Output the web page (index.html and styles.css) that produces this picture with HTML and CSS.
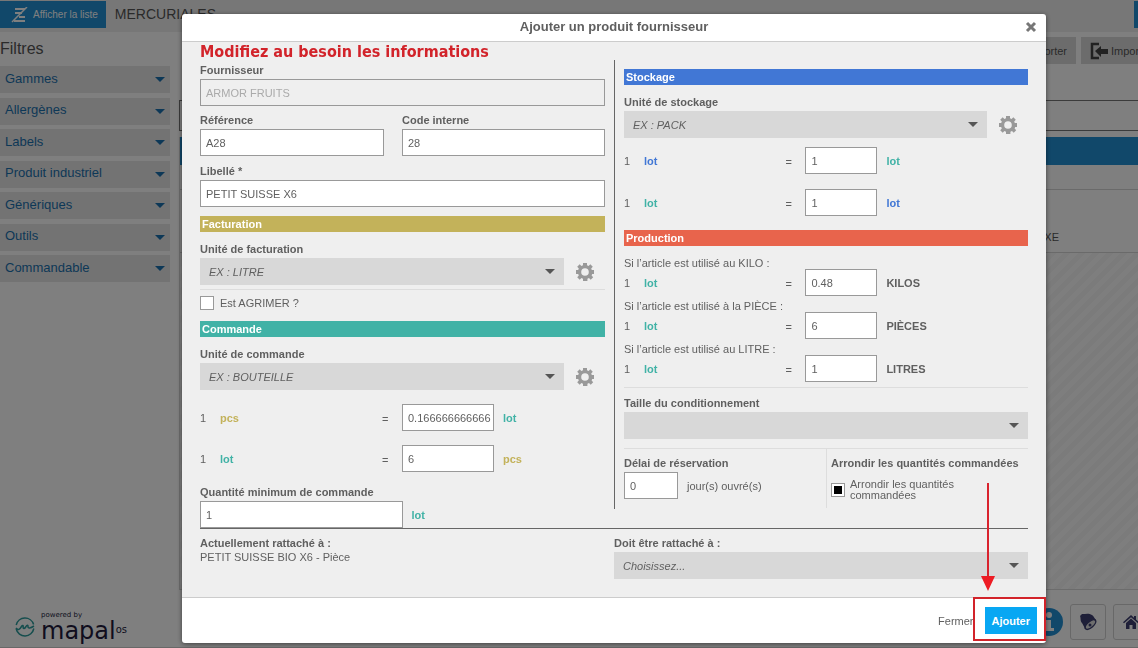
FILE: index.html
```html
<!DOCTYPE html>
<html lang="fr">
<head>
<meta charset="utf-8">
<title>Mercuriales</title>
<link rel="stylesheet" href="styles.css">
</head>
<body>
<svg class="defs" width="0" height="0" aria-hidden="true">
  <symbol id="gear" viewBox="0 0 20 20">
    <path fill-rule="evenodd" d="M8 1h4v2.200l1.600.7 1.700-1.600 2.500 2.500-1.600 1.700.6 1.500H19v4h-1.800l-.6 1.500 1.600 1.700-2.500 2.500-1.700-1.600-1.600.7V19H8v-2.200l-1.600-.7-1.700 1.600-2.500-2.500 1.600-1.700-.6-1.500H1V8h2.200l.6-1.500-1.600-1.700 2.500-2.500 1.700 1.600 1.600-.7zM10 6.200a3.800 3.800 0 1 0 0 7.600 3.800 3.800 0 0 0 0-7.600z"/>
  </symbol>
</svg>

<div class="app">
  <header class="topbar">
    <button class="btn-list" type="button">
      <svg width="18" height="16" viewBox="0 0 18 16" fill="none" stroke="#fff" stroke-width="2" aria-hidden="true"><path d="M4 2h10M4 6h7M8 10h6M3 14h11"/><path d="M16 0 1 15" stroke-width="1.500"/></svg>
      Afficher la liste
    </button>
    <h1 class="page-title">MERCURIALES</h1>
    <span class="topbar-end"></span>
  </header>

  <div class="content">
    <aside class="filters">
      <h2 class="filters-title">Filtres</h2>
      <ul class="filter-list">
        <li><button type="button">Gammes</button></li>
        <li><button type="button">Allergènes</button></li>
        <li><button type="button">Labels</button></li>
        <li><button type="button">Produit industriel</button></li>
        <li><button type="button">Génériques</button></li>
        <li><button type="button">Outils</button></li>
        <li><button type="button">Commandable</button></li>
      </ul>
    </aside>
    <main class="main">
      <div class="toolbar">
        <button class="btn-tool" type="button">orter</button>
        <button class="btn-tool" type="button">
          <svg width="18" height="18" viewBox="0 0 18 18" aria-hidden="true"><path d="M9 2H2v14h7" fill="none" stroke="#444" stroke-width="2.500"/><path d="M5 9l6-5v3h7v5h-7v3z" fill="#444"/></svg>
          Importer
        </button>
      </div>
      <div class="search-box"></div>
      <div class="grid">
        <div class="grid-head"></div>
        <div class="grid-filter"></div>
        <div class="grid-row">XE</div>
        <div class="grid-empty"></div>
      </div>
    </main>
  </div>

  <footer class="app-footer">
    <div class="brand">
      <svg width="20" height="20" viewBox="0 0 20 20" fill="none" stroke="#2c9c9c" stroke-width="1.500" aria-hidden="true"><path d="M1.200 8A9 9 0 0 1 18.600 7.500M18.800 11.500A9 9 0 0 1 1.200 12"/><path d="M1 11c2 3 4 1 5.500-1.500 1-1.700 2-1 1.700.5-.4 2 1.300 2 2.500 0 1.500-2.500 2.500-2 2.300-.3-.2 2 2.500 1.500 6-.7"/></svg>
      <div class="brand-text">
        <span class="brand-by">powered by</span>
        <span class="brand-name">mapal<sup>os</sup></span>
      </div>
    </div>
    <div class="dock">
      <svg width="28" height="28" viewBox="0 0 28 28" aria-hidden="true"><circle cx="14" cy="14" r="14" fill="#2290d4"/><circle cx="14" cy="7" r="3" fill="#fff"/><path d="M9 12h7v8h3v3H9v-3h2v-5H9z" fill="#fff"/></svg>
      <button class="dock-btn" type="button" aria-label="Notifications">
        <svg width="18" height="18" viewBox="0 0 18 18" aria-hidden="true"><path d="M1 3l2-2c4 0 7-1 10 1 2 1 2 3 4 5L6 16C5 13 4 12 3 10 1 8 2 5 1 3z" fill="#3d3f70"/><ellipse cx="11.500" cy="11.500" rx="6.500" ry="3" transform="rotate(-42 11.500 11.500)" fill="#ddd" stroke="#3d3f70" stroke-width="1.500"/><circle cx="11" cy="12" r="1.500" fill="#3d3f70"/></svg>
      </button>
      <button class="dock-btn" type="button" aria-label="Accueil">
        <svg width="16" height="14" viewBox="0 0 16 14" fill="#3d3f70" aria-hidden="true"><path d="M8 0l3 2.700V1h2v3.500L16 7.300l-1 1L8 2.200 1 8.300l-1-1z"/><path d="M8 3.500l5 4.400V14H9.500v-4h-3v4H3V7.900z"/></svg>
      </button>
    </div>
  </footer>
</div>

<div class="overlay">
  <form class="modal" role="dialog" aria-labelledby="modal-title">
    <header class="modal-head">
      <h2 id="modal-title">Ajouter un produit fournisseur</h2>
      <button class="close" type="button" aria-label="Fermer la fenêtre">
        <svg width="12" height="12" viewBox="0 0 12 12" stroke="#777" stroke-width="3" aria-hidden="true"><path d="M2 2l8 8M10 2l-8 8"/></svg>
      </button>
    </header>

    <div class="modal-body">
      <p class="note">Modifiez au besoin les informations</p>
      <div class="columns">
        <div class="col-left">
          <div class="field">
            <label for="fournisseur">Fournisseur</label>
            <input id="fournisseur" type="text" value="ARMOR FRUITS" disabled>
          </div>
          <div class="pair gap-s">
            <div class="field">
              <label for="reference">Référence</label>
              <input id="reference" type="text" value="A28">
            </div>
            <div class="field">
              <label for="code">Code interne</label>
              <input id="code" type="text" value="28">
            </div>
          </div>
          <div class="field gap-n">
            <label for="libelle">Libellé *</label>
            <input id="libelle" type="text" value="PETIT SUISSE X6">
          </div>

          <h3 class="band band-fact gap-b">Facturation</h3>
          <div class="field gap-m">
            <label for="u-fact">Unité de facturation</label>
            <div class="with-gear">
              <div class="select"><select id="u-fact"><option>EX : LITRE</option></select></div>
              <button class="gear" type="button" aria-label="Gérer les unités"><svg width="20" height="20"><use href="#gear"/></svg></button>
            </div>
          </div>
          <label class="check-row"><input type="checkbox">Est AGRIMER ?</label>

          <h3 class="band band-cmd">Commande</h3>
          <div class="field gap-m">
            <label for="u-cmd">Unité de commande</label>
            <div class="with-gear">
              <div class="select"><select id="u-cmd"><option>EX : BOUTEILLE</option></select></div>
              <button class="gear" type="button" aria-label="Gérer les unités"><svg width="20" height="20"><use href="#gear"/></svg></button>
            </div>
          </div>
          <div class="conv gap-l">
            <span>1</span><b class="gold">pcs</b><span class="eq">=</span><input type="text" aria-label="Lots par pièce" value="0.16666666666666666"><b class="teal">lot</b>
          </div>
          <div class="conv gap-l">
            <span>1</span><b class="teal">lot</b><span class="eq">=</span><input type="text" aria-label="Pièces par lot" value="6"><b class="gold">pcs</b>
          </div>
          <div class="field gap-q">
            <label for="qmin">Quantité minimum de commande</label>
            <div class="qty"><input id="qmin" type="text" value="1"><b class="teal">lot</b></div>
          </div>
        </div>

        <div class="col-right">
          <h3 class="band band-stock">Stockage</h3>
          <div class="field gap-m">
            <label for="u-stock">Unité de stockage</label>
            <div class="with-gear">
              <div class="select"><select id="u-stock"><option>EX : PACK</option></select></div>
              <button class="gear" type="button" aria-label="Gérer les unités"><svg width="20" height="20"><use href="#gear"/></svg></button>
            </div>
          </div>
          <div class="conv gap-b">
            <span>1</span><b class="blue">lot</b><span class="eq">=</span><input type="text" aria-label="Lots de commande par lot de stockage" value="1"><b class="teal">lot</b>
          </div>
          <div class="conv gap-xl">
            <span>1</span><b class="teal">lot</b><span class="eq">=</span><input type="text" aria-label="Lots de stockage par lot de commande" value="1"><b class="blue">lot</b>
          </div>

          <h3 class="band band-prod gap-l">Production</h3>
          <div class="usages">
            <div>
              <label for="kilo">Si l’article est utilisé au KILO :</label>
              <div class="conv"><span>1</span><b class="teal">lot</b><span class="eq">=</span><input id="kilo" type="text" value="0.48"><b>KILOS</b></div>
            </div>
            <div>
              <label for="piece">Si l’article est utilisé à la PIÈCE :</label>
              <div class="conv"><span>1</span><b class="teal">lot</b><span class="eq">=</span><input id="piece" type="text" value="6"><b>PIÈCES</b></div>
            </div>
            <div>
              <label for="litre">Si l’article est utilisé au LITRE :</label>
              <div class="conv"><span>1</span><b class="teal">lot</b><span class="eq">=</span><input id="litre" type="text" value="1"><b>LITRES</b></div>
            </div>
          </div>

          <div class="field packaging">
            <label for="taille">Taille du conditionnement</label>
            <div class="select"><select id="taille"><option></option></select></div>
          </div>

          <div class="extras">
            <div class="field delay">
              <label for="delai">Délai de réservation</label>
              <div class="delay-row"><input id="delai" type="text" value="0"><span>jour(s) ouvré(s)</span></div>
            </div>
            <div class="rounding">
              <h4>Arrondir les quantités commandées</h4>
              <label class="round-check"><input type="checkbox" checked><span>Arrondir les quantités commandées</span></label>
            </div>
          </div>
        </div>
      </div>

      <div class="attach">
        <div class="attach-now">
          <strong>Actuellement rattaché à :</strong>
          <span>PETIT SUISSE BIO X6 - Pièce</span>
        </div>
        <div class="field">
          <label for="attach">Doit être rattaché à :</label>
          <div class="select"><select id="attach"><option>Choisissez...</option></select></div>
        </div>
      </div>
    </div>

    <footer class="modal-foot">
      <button class="btn-close" type="button">Fermer</button>
      <div class="submit-wrap">
        <button class="btn-add" type="submit">Ajouter</button>
        <span class="frame"></span>
        <svg class="arrow" width="14" height="108" viewBox="0 0 14 108" aria-hidden="true"><path d="M7 0v94" stroke="#d9232e" stroke-width="2"/><path d="M0 93h14L7 108z" fill="#ed1c24"/></svg>
      </div>
    </footer>
  </form>
</div>
</body>
</html>
```
FILE: styles.css
```css
* { box-sizing: border-box; }

html { height: 100%; overflow: hidden; }

body {
  height: 100%;
  margin: 0;
  overflow: hidden;
  font: 11px/14px "Liberation Sans", Arial, sans-serif;
  color: #5f5f5f;
}

h1, h2, h3, h4, p, ul { margin: 0; padding: 0; }
button, input, select { font: inherit; color: inherit; margin: 0; }
button { border: 0; padding: 0; background: none; white-space: nowrap; }
.defs { position: absolute; }

/* ---- Application behind the dialog ---- */
.app {
  display: flex;
  flex-direction: column;
  height: 100%;
  margin-right: -23px;
  background: #fff;
}

.topbar {
  display: flex;
  align-items: flex-start;
  flex: 0 0 32px;
  padding-top: 1px;
  background: #efefef;
}

.btn-list {
  display: flex;
  align-items: center;
  gap: 4px;
  height: 27px;
  padding: 0 8px 0 11px;
  background: #2290d4;
  font-size: 10px;
  color: #fff;
}

.page-title {
  flex: 1;
  padding-left: 9px;
  font-size: 14px;
  font-weight: normal;
  line-height: 27px;
  color: #555;
}

.topbar-end { width: 27px; height: 27px; background: #2290d4; }

.content { display: flex; flex: 1; gap: 9px; min-height: 0; }

.filters { flex: 0 0 170px; }

.filters-title {
  font-size: 16px;
  font-weight: normal;
  line-height: 34px;
  color: #555;
}

.filter-list {
  display: flex;
  flex-direction: column;
  justify-content: space-between;
  height: 216px;
  list-style: none;
}

.filter-list button {
  display: flex;
  justify-content: space-between;
  align-items: center;
  width: 100%;
  height: 27px;
  padding: 0 5px 2px;
  background: #e6e6e6;
  font-size: 13px;
  color: #1b71ae;
}

.filter-list button::after {
  content: "";
  margin-top: 2px;
  border: 5px solid transparent;
  border-top-color: #1b71ae;
  border-bottom: 0;
}

.main { display: flex; flex: 1; flex-direction: column; }

.toolbar {
  display: flex;
  justify-content: flex-end;
  gap: 5px;
  padding: 5px 0 36px;
}

.btn-tool {
  display: flex;
  align-items: center;
  gap: 3px;
  height: 27px;
  padding: 0 9px;
  background: #d9d9d9;
  color: #555;
}

.search-box { height: 31px; border: 1px solid #777; }

.grid {
  display: flex;
  flex: 1;
  flex-direction: column;
  margin-top: 6px;
  border: 1px solid #d8d8d8;
  border-top: 0;
}

.grid-head { height: 28px; background: #2290d4; }
.grid-filter { height: 25px; border-bottom: 1px solid #d4d4d4; }

.grid-row {
  height: 63px;
  padding: 40px 101px 0 0;
  border-bottom: 1px solid #d4d4d4;
  text-align: right;
  color: #555;
}

.grid-empty {
  flex: 1;
  background: repeating-linear-gradient(135deg, #fcfcfc 0 5px, #f7f7f7 5px 10px);
}

.app-footer {
  display: flex;
  justify-content: space-between;
  align-items: center;
  flex: 0 0 58px;
  padding: 7px 12px 0 15px;
  border-bottom: 1px solid #d0d0d0;
}

.brand { display: flex; align-items: center; gap: 6px; padding-top: 9px; color: #221b3c; }
.brand-text { display: flex; flex-direction: column; }
.brand-by { font: 7px/8px "DejaVu Sans", sans-serif; }
.brand-name { height: 24px; font: 24px/24px "DejaVu Sans", sans-serif; }
.brand-name sup { font-size: 10px; line-height: 10px; vertical-align: 6px; }

.dock { display: flex; align-items: center; gap: 7px; }

.dock-btn {
  display: grid;
  place-items: center;
  width: 36px;
  height: 36px;
  border: 1px solid #d0d0d0;
  border-radius: 3px;
}

/* ---- Dialog ---- */
.overlay {
  position: fixed;
  inset: 0;
  padding: 14px 92px 0 182px;
  background: rgba(0, 0, 0, .5);
}

.modal {
  border-radius: 3px;
  background: #fff;
  box-shadow: 0 1px 5px rgba(0, 0, 0, .5);
}

.modal-head {
  display: flex;
  align-items: center;
  height: 28px;
  padding: 0 9px 1px 21px;
  border-bottom: 1px solid #ccc;
}

.modal-head h2 { flex: 1; font-size: 13px; line-height: 16px; text-align: center; }
.close { display: grid; }

.modal-body { padding: 0 18px 18px; background: #efefef; }

.note {
  height: 18px;
  font: bold 16px/20px "DejaVu Sans Condensed", "DejaVu Sans", sans-serif;
  color: #d2232a;
}

.columns {
  display: grid;
  grid-template-columns: 405fr 414fr;
  gap: 9px;
  align-items: start;
}

.col-left { padding-top: 1px; }
.col-right { padding: 9px 0 9px 9px; border-left: 1px solid #666; }

.gap-s { margin-top: 5px; }
.gap-n { margin-top: 6px; }
.gap-m { margin-top: 8px; }
.gap-b { margin-top: 9px; }
.gap-q { margin-top: 11px; }
.gap-l { margin-top: 14px; }
.gap-xl { margin-top: 15px; }

.field > label { display: block; font-weight: bold; line-height: 18px; }

input[type="text"] {
  display: block;
  width: 100%;
  min-width: 0;
  height: 27px;
  padding: 0 2px 0 5px;
  border: 1px solid #999;
  border-radius: 0;
  background: #fff;
}

input[type="text"]:disabled { background: #efefef; color: #aaa; }

.pair { display: grid; grid-template-columns: 184fr 203fr; gap: 18px; }

.band { padding: 0 2px; font-size: 11px; line-height: 16px; color: #fff; }
.band-fact { background: #c3b25a; }
.band-cmd { background: #41b2a6; }
.band-stock { background: #4177d5; }
.band-prod { background: #e8644c; }

.with-gear { display: flex; align-items: center; gap: 11px; padding-right: 10px; }
.with-gear .select { flex: 1; }
.gear { display: grid; fill: #999; }

.select { position: relative; }

.select select {
  display: block;
  width: 100%;
  height: 27px;
  padding: 0 24px 0 9px;
  border: 0;
  border-radius: 0;
  background: #d8d8d8;
  font-style: italic;
  appearance: none;
}

.select::after {
  content: "";
  position: absolute;
  top: 11px;
  right: 9px;
  border: 5px solid transparent;
  border-top-color: #555;
  border-bottom: 0;
  pointer-events: none;
}

input[type="checkbox"] {
  display: grid;
  place-content: center;
  flex: none;
  width: 14px;
  height: 14px;
  border: 1px solid #999;
  background: #fff;
  appearance: none;
}

input[type="checkbox"]:checked::before {
  content: "";
  width: 8px;
  height: 8px;
  background: #000;
}

.check-row {
  display: flex;
  align-items: center;
  gap: 6px;
  margin-top: 4px;
  padding: 6px 0 11px;
  border-top: 1px solid #ddd;
}

.conv {
  display: grid;
  grid-template-columns: 20px 40% 20px 92px 1fr;
  align-items: center;
}

.col-right .conv { grid-template-columns: 20px 35% 20px 72px 1fr; }
.conv > :last-child { padding-left: 9px; }
.eq { padding-top: 3px; }

.teal { color: #41b2a6; }
.gold { color: #c3b25a; }
.blue { color: #4177d5; }

.qty { display: flex; align-items: center; gap: 9px; }
.qty input { width: 50%; }

.usages {
  display: grid;
  gap: 4px;
  padding: 11px 0 5px;
  border-bottom: 1px solid #ddd;
}

.usages label { display: block; line-height: 12px; }

.packaging { padding: 6px 0 9px; border-bottom: 1px solid #ddd; }

.extras { display: grid; grid-template-columns: 1fr 1fr; margin-bottom: -8px; }
.delay { padding-top: 5px; }
.delay-row { display: flex; align-items: center; gap: 9px; }
.delay-row input { width: 54px; }

.rounding { padding: 5px 0 7px 4px; border-left: 1px solid #ddd; }
.rounding h4 { font-size: 11px; line-height: 18px; white-space: nowrap; }

.round-check {
  display: flex;
  align-items: center;
  gap: 5px;
  max-width: 150px;
  padding-top: 7px;
  line-height: 11px;
}

.attach {
  display: grid;
  grid-template-columns: 1fr 1fr;
  padding-top: 5px;
  border-top: 1px solid #666;
}

.attach-now { display: flex; flex-direction: column; padding-top: 2px; }

.modal-foot {
  display: flex;
  justify-content: flex-end;
  align-items: center;
  gap: 11px;
  height: 46px;
  padding-right: 9px;
  border-top: 1px solid #ccc;
}

.submit-wrap { position: relative; }

.btn-add {
  display: block;
  height: 27px;
  padding: 0 7px;
  background: #08a7f3;
  font-weight: bold;
  color: #fff;
}

/* Highlight frame and pointer drawn over the submit button */
.frame {
  position: absolute;
  inset: -10px -9px -7px -12px;
  border: 2px solid #d2232a;
  pointer-events: none;
}

.arrow {
  position: absolute;
  left: -4px;
  bottom: 43px;
  pointer-events: none;
}
```
